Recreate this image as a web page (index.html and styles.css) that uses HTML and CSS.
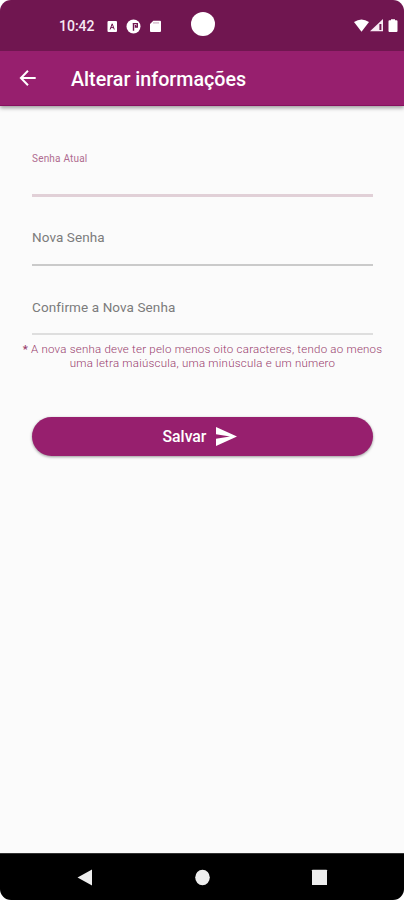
FILE: index.html
```html
<!DOCTYPE html>
<html lang="pt-BR">
<head>
<meta charset="utf-8">
<title>Alterar informações</title>
<link rel="stylesheet" href="styles.css">
</head>
<body>
<div class="phone">
  <header class="header">
    <div class="status">
      <span class="clock">10:42</span>
      <svg class="notices" width="54" height="14" viewBox="0 0 54 14">
        <rect x="0.500" y="1" width="9.500" height="11" rx="1" fill="#fff"/>
        <path d="M3.100 9.500 5.200 3.800 7.300 9.500M3.900 7.600h2.600" fill="none" stroke="#701650" stroke-width="1"/>
        <circle cx="26.500" cy="6.500" r="7" fill="#fff"/>
        <path d="M26.500 10.800V3.300M25.700 3.600H30.300V7H28.500V5" fill="none" stroke="#701650" stroke-width="1.400"/>
        <path d="M46.300.8H53a1 1 0 0 1 1 1V11a1 1 0 0 1-1 1H44a1 1 0 0 1-1-1V4z" fill="#fff"/>
        <path d="M47 2.300v1.200M49 2.300v1.200M51 2.300v1.200" stroke="#701650" stroke-width=".7"/>
      </svg>
      <span class="camera"></span>
      <svg class="signals" width="45" height="14" viewBox="0 0 45 14">
        <path d="M0 3Q7.500-2 15 3L7.500 12.700z" fill="#fff"/>
        <path d="M29 0V12.300H16z" fill="#f7e9f3"/>
        <path d="M25.400 5h2v6h-2z" fill="#701650"/>
        <path d="M37 .2h4v1.100h1.500a1 1 0 0 1 1 1V12a1 1 0 0 1-1 1h-7a1 1 0 0 1-1-1V2.300a1 1 0 0 1 1-1H37z" fill="#fff"/>
      </svg>
    </div>
    <div class="appbar">
      <svg class="back" width="18" height="18" viewBox="0 0 18 18"><path d="M9 1.700 1.900 9 9 16.200M2 9H16.700" fill="none" stroke="#fff" stroke-width="2"/></svg>
      <h1 class="title">Alterar informações</h1>
    </div>
  </header>
  <main class="content">
    <div class="field field-active"><label class="label">Senha Atual</label></div>
    <div class="field"><label class="label">Nova Senha</label></div>
    <div class="field field-last"><label class="label">Confirme a Nova Senha</label></div>
    <p class="hint"><span class="hint-first"><span class="star">*</span> A nova senha deve ter pelo menos oito caracteres, tendo ao menos</span><span class="hint-second">uma letra maiúscula, uma minúscula e um número</span></p>
    <button class="save"><span>Salvar</span><svg width="21" height="19" viewBox="0 0 21 19"><path d="M0 0 21 9.500 0 19V11.700L14 9.500 0 7.300z" fill="#fff"/></svg></button>
  </main>
  <nav class="navbar">
    <svg width="15" height="17" viewBox="0 0 15 17"><path d="M-.5 8.500 14 .5V16.500z" fill="#eee"/></svg>
    <svg width="15" height="17" viewBox="0 0 15 17"><ellipse cx="7.500" cy="8.500" rx="7.300" ry="7.700" fill="#eee"/></svg>
    <svg width="15" height="17" viewBox="0 0 15 17"><rect y=".7" width="15" height="15.300" rx=".6" fill="#eee"/></svg>
  </nav>
</div>
</body>
</html>
```
FILE: styles.css
```css
* { box-sizing: border-box; }
body { margin: 0; background: #fff; font-family: Roboto, sans-serif; }
svg { overflow: visible; }
.phone { width: 404px; height: 900px; display: flex; flex-direction: column; overflow: hidden; border-radius: 11px; background: #fbfbfb; }
.header { height: 106px; flex: none; box-shadow: 0 2px 4px rgba(0,0,0,.38); }
.status { height: 51px; display: flex; align-items: flex-start; padding: 12px 6px 0 59px; background: #701650; }
.clock { width: 48px; padding-top: 6px; font-size: 14px; line-height: 17px; font-weight: 500; color: #f6e9f2; white-space: nowrap; }
.notices { margin-top: 8px; }
.camera { width: 24px; height: 24px; margin-left: 30px; border-radius: 50%; background: #fff; }
.signals { margin: 7px -1px 0 auto; }
.appbar { height: 55px; display: flex; align-items: center; padding-left: 19px; background: #971f6e; border-bottom: 1px solid #86105f; }
.title { margin: 3px 0 0 34px; font-size: 19.700px; line-height: 24px; font-weight: 500; color: #fff; white-space: nowrap; }
.content { flex: 1; display: flex; flex-direction: column; padding: 33px 31px 0 32px; }
.field { height: 69px; padding-top: 31px; border-bottom: 2px solid #cacaca; }
.label { display: block; font-size: 13.500px; line-height: 18px; letter-spacing: .1px; color: #7c7c7c; white-space: nowrap; }
.field-active { height: 58px; padding-top: 12px; border-bottom: 3px solid #e1d0d7; }
.field-active .label { font-size: 10px; line-height: 15px; letter-spacing: .2px; color: #af6c90; }
.field-last { padding-top: 32px; border-bottom: 2px solid #dedede; }
.hint { margin: 8px -12px 0; display: flex; flex-direction: column; align-items: center; font-size: 11.500px; line-height: 13.500px; letter-spacing: .23px; font-weight: 300; color: #983b6d; white-space: nowrap; }
.star { font-weight: 500; }
.save { height: 39px; margin-top: 47px; flex: none; display: flex; align-items: center; justify-content: center; gap: 10px; padding: 0 5px 0 0; border: 0; border-radius: 20px; background: #971f6e; box-shadow: 0 1px 3px rgba(0,0,0,.4); font: 500 15.800px/20px Roboto, sans-serif; color: #fff; }
.navbar { height: 47px; flex: none; display: flex; justify-content: center; align-items: center; gap: 102px; border-top: 1px solid #333; background: #000; }
```
